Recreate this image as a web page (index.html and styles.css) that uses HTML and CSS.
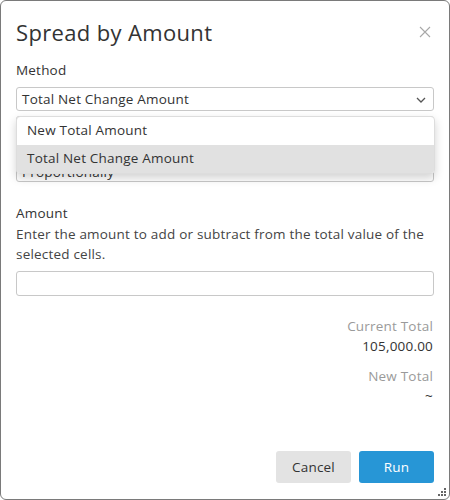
FILE: index.html
```html
<!DOCTYPE html>
<html>
<head>
<meta charset="utf-8">
<link rel="stylesheet" href="styles.css">
</head>
<body>
<div class="dialog">
  <div class="header">
    <h1 class="title">Spread by Amount</h1>
    <span class="close">
      <svg width="12" height="12" viewBox="0 0 12 12"><path d="M1 1L11 11M11 1L1 11" stroke="#a8a8a8" stroke-width="1.1" fill="none"/></svg>
    </span>
  </div>
  <div class="label method-label">Method</div>
  <div class="select-wrap">
    <div class="select">
      <span>Total Net Change Amount</span>
      <svg class="chev" width="10" height="6" viewBox="0 0 10 6"><path d="M1 1L5 5L9 1" stroke="#555" stroke-width="1.3" fill="none"/></svg>
    </div>
    <div class="menu">
      <div class="item">New Total Amount</div>
      <div class="item active">Total Net Change Amount</div>
    </div>
  </div>
  <div class="field2"><span>Proportionally</span></div>
  <div class="label amount-label">Amount</div>
  <p class="desc">Enter the amount to add or subtract from the total value of the selected cells.</p>
  <div class="input"></div>
  <div class="totals">
    <div class="t-label">Current Total</div>
    <div class="t-value">105,000.00</div>
    <div class="t-label second">New Total</div>
    <div class="t-value">~</div>
  </div>
  <div class="footer">
    <button class="btn cancel">Cancel</button>
    <button class="btn run">Run</button>
  </div>
  <svg class="grip" width="8" height="8" viewBox="0 0 8 8"><g fill="#666"><rect x="6" y="0" width="2" height="2"/><rect x="3" y="3" width="2" height="2"/><rect x="6" y="3" width="2" height="2"/><rect x="0" y="6" width="2" height="2"/><rect x="3" y="6" width="2" height="2"/><rect x="6" y="6" width="2" height="2"/></g></svg>
</div>
</body>
</html>
```
FILE: styles.css
```css
* { box-sizing: border-box; }
html, body { margin: 0; padding: 0; background: #fff; }
body { font-family: "Open Sans", "Liberation Sans", sans-serif; color: #333; letter-spacing: 0.2px; }
.dialog {
  position: relative;
  width: 450px;
  height: 500px;
  border: 1px solid #7a7a7a;
  border-radius: 6px;
  padding: 0 15px;
  display: flex;
  flex-direction: column;
}
.header { display: flex; justify-content: space-between; align-items: center; height: 62px; padding-top: 0; }
.title { margin: 0; font-size: 22px; font-weight: 400; color: #333; letter-spacing: 0.35px; }
.close { display: flex; margin-right: 3px; }
.label { font-size: 13.5px; font-weight: 500; color: #333; }
.method-label { height: 24px; line-height: 14px; }
.select-wrap { position: relative; }
.select {
  height: 24px; border: 1px solid #c8c8c8; border-radius: 3px;
  display: flex; align-items: center; justify-content: space-between;
  padding: 0 7px 0 5px; font-size: 13.5px; color: #333;
}
.chev { margin-top: 1px; }
.menu {
  position: absolute; left: 0; right: -1px; top: 29px;
  background: #fff; border: 1px solid #ddd; border-radius: 4px;
  box-shadow: 0 4px 10px rgba(0,0,0,0.18);
  overflow: hidden; z-index: 2;
}
.item { height: 28px; line-height: 27px; padding-left: 10px; font-size: 13.5px; color: #333; }
.item.active { background: #e1e1e1; }
.field2 {
  margin-top: 5px; height: 66px; border: 1px solid #c8c8c8; border-radius: 3px;
  display: flex; align-items: flex-end; padding: 0 5px 0; font-size: 13.5px; color: #333;
}
.amount-label { margin-top: 22px; line-height: 18px; }
.desc { margin: 2px 0 0; font-size: 13.5px; line-height: 20px; color: #444; }
.input { margin-top: 7px; height: 25px; border: 1px solid #c8c8c8; border-radius: 3px; }
.totals { margin-top: 20px; text-align: right; padding-right: 1px; font-size: 13.5px; }
.t-label { color: #9a9a9a; line-height: 20px; }
.t-label.second { margin-top: 10px; }
.t-value { color: #333; line-height: 20px; }
.footer { margin-top: auto; margin-bottom: 16px; display: flex; justify-content: flex-end; gap: 8px; }
.btn {
  width: 75px; height: 32px; border: none; border-radius: 3px;
  font-family: inherit; font-size: 13.5px; letter-spacing: 0.2px; cursor: pointer;
}
.cancel { background: #e3e3e3; color: #333; }
.run { background: #2796d6; color: #fff; font-weight: 500; }
.grip { position: absolute; right: 3px; bottom: 3px; }
```
